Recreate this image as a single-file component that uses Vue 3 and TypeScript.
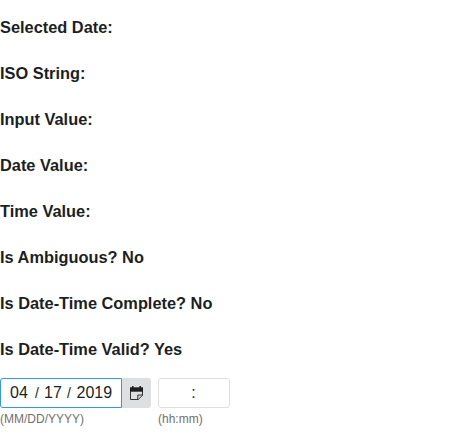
<script setup lang="ts">
import { ref } from 'vue'

const statuses: string[] = [
  'Selected Date:',
  'ISO String:',
  'Input Value:',
  'Date Value:',
  'Time Value:',
  'Is Ambiguous? No',
  'Is Date-Time Complete? No',
  'Is Date-Time Valid? Yes',
]
const month = ref('04')
const day = ref('17')
const year = ref('2019')
const hour = ref('')
const minute = ref('')
</script>

<template>
  <main class="page">
    <h3 v-for="status in statuses" :key="status" class="status">{{ status }}</h3>
    <div class="fields">
      <div>
        <div class="date-group">
          <div class="box date-box">
            <input v-model="month" class="part month" aria-label="Month" />
            <span class="slash first">/</span>
            <input v-model="day" class="part day" aria-label="Day" />
            <span class="slash second">/</span>
            <input v-model="year" class="part year" aria-label="Year" />
          </div>
          <button type="button" class="calendar" aria-label="Open calendar">
            <svg width="13" height="14" viewBox="0 0 13 14" fill="none">
              <path d="M0.5 5V13.5H8.3L12.5 9.3V5" stroke="#1c1f23" stroke-width="0.9" />
              <path d="M7.8 13.5V9H12.5" stroke="#1c1f23" stroke-width="0.9" />
              <path d="M0 1.3H13V5.7H0Z" fill="#1c1f23" />
              <path d="M2 0H3.5V2H2ZM9.5 0H11V2H9.5Z" fill="#1c1f23" />
            </svg>
          </button>
        </div>
        <div class="hint">(MM/DD/YYYY)</div>
      </div>
      <div>
        <div class="box time-box">
          <input v-model="hour" class="part time-part" aria-label="Hour" />
          <span>:</span>
          <input v-model="minute" class="part minute-part" aria-label="Minute" />
        </div>
        <div class="hint">(hh:mm)</div>
      </div>
    </div>
  </main>
</template>

<style>
body {
  background: #fff;
}
</style>

<style scoped>
.page {
  padding-top: 15px;
  font-family: "Liberation Sans", Arial, sans-serif;
  font-size: 16px;
  color: #1c1f23;
}
.status {
  height: 24px;
  margin: 0 0 22px;
  font-size: 16.38px;
  line-height: 24px;
  font-weight: 700;
}
.status:nth-of-type(8) {
  margin-bottom: 17px;
}
.fields {
  display: flex;
  gap: 7px;
}
.date-group {
  display: flex;
}
.box {
  box-sizing: border-box;
  height: 30px;
  display: flex;
  align-items: center;
  border: 1px solid #dedfe0;
  border-radius: 3px;
  background: #fff;
}
.date-box {
  width: 122px;
  padding-left: 9px;
  border-color: #2c9cdc;
  border-radius: 3px 0 0 3px;
}
.part {
  box-sizing: border-box;
  height: 24px;
  margin: 0;
  padding: 0;
  border: 0;
  outline: 0;
  background: transparent;
  font: inherit;
  color: inherit;
}
.month,
.day {
  width: 18px;
}
.year {
  width: 36px;
}
.slash {
  width: 4px;
  font-size: 14px;
  line-height: 24px;
}
.first {
  margin: 0 5px 0 7px;
}
.second {
  margin: 0 5.5px 0 5px;
}
.calendar {
  width: 29px;
  height: 30px;
  padding: 0;
  display: flex;
  align-items: center;
  justify-content: center;
  border: 0;
  border-radius: 0 3px 3px 0;
  background: #dedfe0;
}
.time-box {
  width: 72px;
  justify-content: center;
}
.time-part {
  width: 26px;
}
.minute-part {
  width: 27px;
}
.hint {
  margin-top: 3px;
  font-size: 12px;
  line-height: 16px;
  color: #707070;
}
</style>
